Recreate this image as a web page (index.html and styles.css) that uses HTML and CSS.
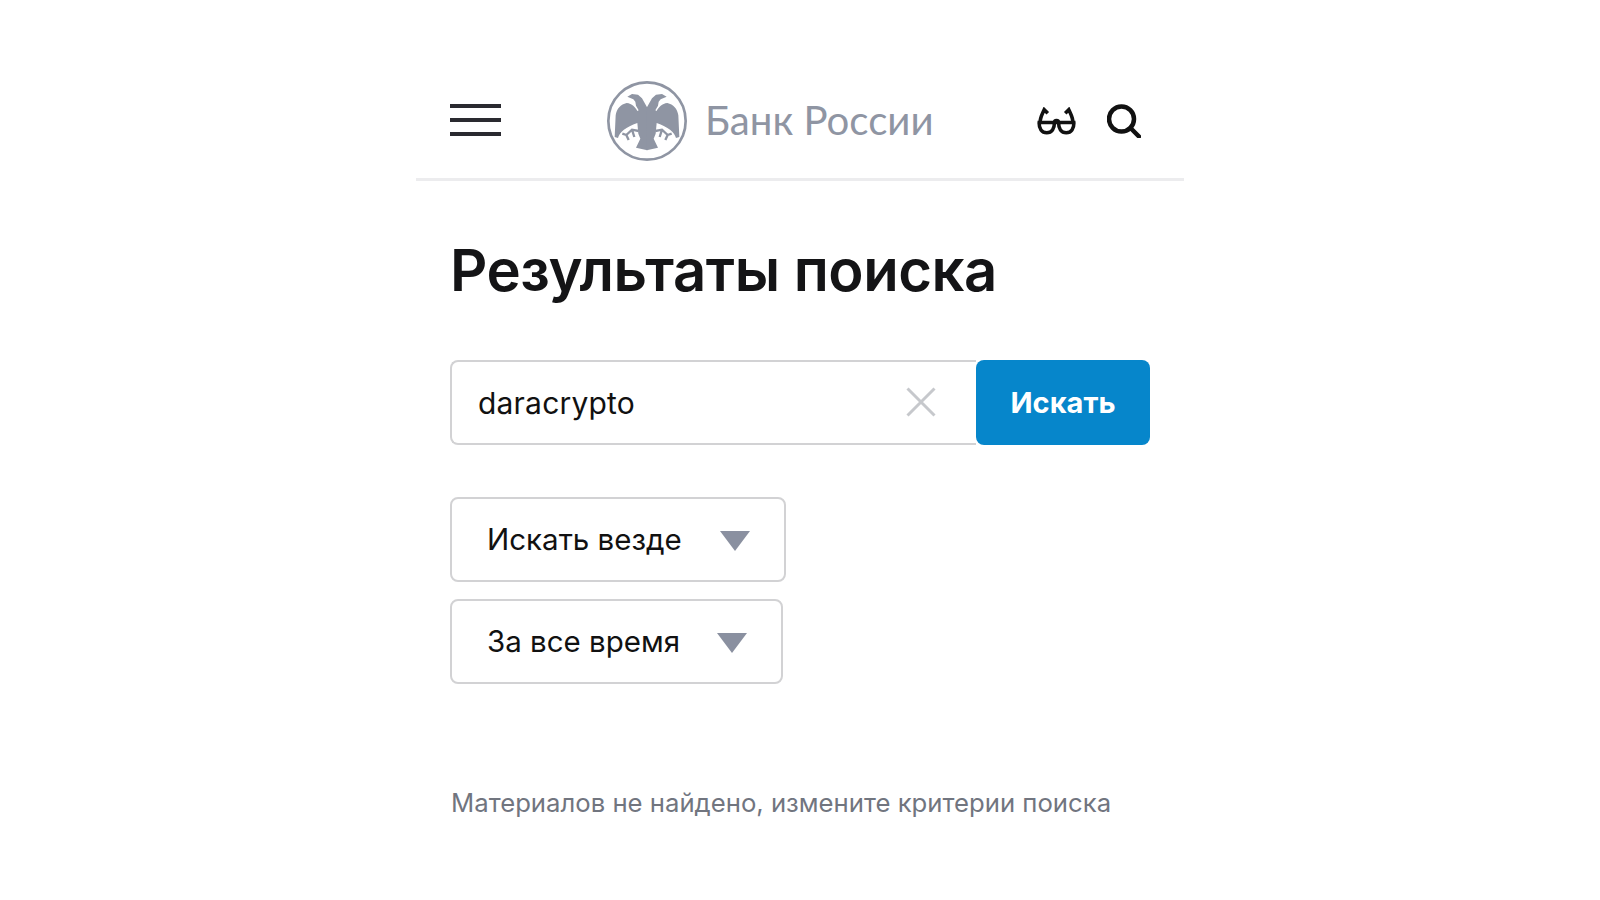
FILE: index.html
```html
<!DOCTYPE html>
<html lang="ru">
<head>
<meta charset="utf-8">
<title>Результаты поиска</title>
<link rel="stylesheet" href="styles.css">
</head>
<body>
<div class="page">
  <header class="header">
    <div class="burger"><span></span><span></span><span></span></div>
    <div class="brand">
      <svg class="emblem" viewBox="49 26 252 252">
        <circle class="ring" cx="175" cy="152" r="116"/>
        <g>
          <path class="fill" d="M176 112 L168 98 L160 84 L148 73 L130 71 L116 79 L134 87 L140 94 L142 106 L150 120 L146 122 C140 110 130 100 114 98 C96 102 84 115 81 135 L78 200 L88 203 C92 186 112 170 146 158 L149 190 L155 205 L142 232 L176 240 Z"/>
          <path class="leg" d="M150 182 L130 178 L113 194 M113 194 L101 190 M113 194 L120 209 M130 178 L137 200"/>
        </g>
        <g transform="translate(350 0) scale(-1 1)">
          <path class="fill" d="M176 112 L168 98 L160 84 L148 73 L130 71 L116 79 L134 87 L140 94 L142 106 L150 120 L146 122 C140 110 130 100 114 98 C96 102 84 115 81 135 L78 200 L88 203 C92 186 112 170 146 158 L149 190 L155 205 L142 232 L176 240 Z"/>
          <path class="leg" d="M150 182 L130 178 L113 194 M113 194 L101 190 M113 194 L120 209 M130 178 L137 200"/>
        </g>
      </svg>
      <span class="brand-name">Банк России</span>
    </div>
    <div class="tools">
      <svg class="glasses" viewBox="0 0 40 27">
        <path d="M1.500 15 H38.500 M3 15 C3 21 5.500 25 10.500 25 C15.500 25 18 21 18 15 M22 15 C22 21 24.500 25 29.500 25 C34.500 25 37 21 37 15 M18 15 C18 12.500 22 12.500 22 15 M4 15 C4 10 6 7 8 2.500 L11.500 6 M36 15 C36 10 34 7 32 2.500 L28.500 6"/>
      </svg>
      <svg class="loupe" viewBox="0 0 34 34">
        <circle cx="14.500" cy="15" r="12.500"/>
        <path d="M23.500 24 L32 32.500"/>
      </svg>
    </div>
  </header>
  <main class="content">
    <h1 class="title">Результаты поиска</h1>
    <form class="search">
      <div class="field">
        <span class="query">daracrypto</span>
        <svg class="clear" viewBox="0 0 30 30"><path d="M1.500 1.500 L28.500 28.500 M28.500 1.500 L1.500 28.500"/></svg>
      </div>
      <div class="submit">Искать</div>
    </form>
    <div class="filters">
      <div class="select select-wide"><span class="select-label">Искать везде</span><i class="caret"></i></div>
      <div class="select select-narrow"><span class="select-label">За все время</span><i class="caret"></i></div>
    </div>
    <p class="empty">Материалов не найдено, измените критерии поиска</p>
  </main>
</div>
</body>
</html>
```

FILE: styles.css
```css
* { box-sizing: border-box; }
html, body { margin: 0; padding: 0; background: #fff; }
body { font-family: Inter, "Noto Sans", sans-serif; color: #111; height: 900px; overflow: hidden; }
.page { width: 768px; margin: 0 auto; }

.header {
  height: 181px;
  padding: 79px 43px 0 34px;
  display: flex;
  align-items: flex-start;
  border-bottom: 3px solid #ececee;
}
.burger { width: 51px; height: 32px; margin-top: 25px; display: flex; flex-direction: column; justify-content: space-between; }
.burger span { display: block; height: 4px; background: #2a2a30; }
.brand { margin-left: 104px; display: flex; align-items: center; gap: 17px; height: 84px; }
.emblem { width: 84px; height: 84px; }
.ring { fill: none; stroke: #8f95a3; stroke-width: 8; }
.fill { fill: #8f95a3; }
.leg { fill: none; stroke: #8f95a3; stroke-width: 7; }
.brand-name { font-family: Lato, sans-serif; font-weight: 400; font-size: 40.200px; color: #8f95a3; white-space: nowrap; margin: -4px 0 0 -1px; }
.tools { margin-left: auto; display: flex; align-items: center; gap: 30px; height: 84px; }
.glasses { width: 41px; height: 28px; fill: none; stroke: #111; stroke-width: 3.500; }
.loupe { width: 34px; height: 34px; margin-top: -1px; fill: none; stroke: #111; stroke-width: 4.500; stroke-linecap: round; }

.content { padding: 0 0 0 34px; }
.title { margin: 55px 0 0; font-size: 58px; line-height: 68px; font-weight: 600; letter-spacing: -0.480px; color: #141416; }
.search { display: flex; width: 700px; height: 85px; margin-top: 56px; }
.field {
  flex: 1;
  display: flex;
  align-items: center;
  justify-content: space-between;
  padding: 0 40px 0 26px;
  border: 2px solid #d2d2d4;
  border-right: 0;
  border-radius: 8px 0 0 8px;
}
.query { font-size: 30px; letter-spacing: 0.200px; color: #111; }
.clear { width: 30px; height: 30px; margin-top: -1px; fill: none; stroke: #c6c8cc; stroke-width: 3; }
.submit {
  width: 174px;
  display: flex;
  align-items: center;
  justify-content: center;
  background: #0686cb;
  color: #fff;
  font-size: 29px;
  font-weight: 700;
  border-radius: 8px;
}
.filters { margin-top: 52px; display: flex; flex-direction: column; align-items: flex-start; gap: 17px; }
.select {
  height: 85px;
  display: flex;
  align-items: center;
  justify-content: space-between;
  padding: 0 34px 0 35px;
  border: 2px solid #d2d2d4;
  border-radius: 8px;
  font-size: 29.500px;
  color: #111;
}
.select-label { margin-top: -1px; }
.select-wide { width: 336px; }
.select-narrow { width: 333px; }
.caret { width: 0; height: 0; margin-top: 3px; border-left: 15px solid transparent; border-right: 15px solid transparent; border-top: 20px solid #8a90a0; }
.empty { margin: 101px 0 0 1px; font-size: 25.700px; line-height: 36px; color: #71757f; }
```
